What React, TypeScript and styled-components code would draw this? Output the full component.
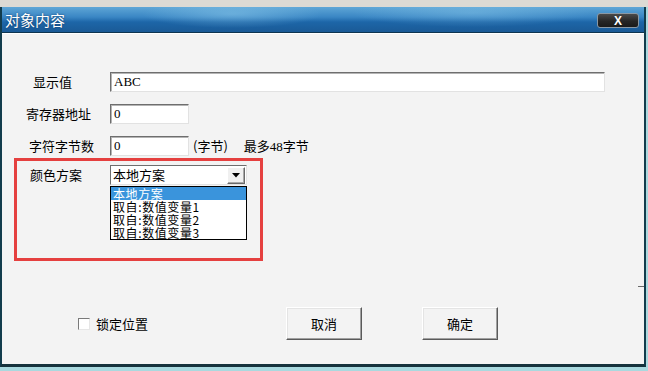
import React from "react";
import styled, { createGlobalStyle } from "styled-components";

const Global = createGlobalStyle`
  html, body { margin: 0; padding: 0; }
  body { width: 648px; height: 371px; overflow: hidden; background: #a9d9df; }
  * { box-sizing: border-box; }
`;

const FONT = `"Noto Sans CJK SC", "Liberation Sans", sans-serif`;
const MONO = `"Liberation Serif", "Noto Sans CJK SC", serif`;

const Page = styled.div`
  width: 648px;
  height: 371px;
  display: flex;
  flex-direction: column;
  background: linear-gradient(#dcdad4 0 7px, #a9d9df 7px);
`;

const Window = styled.div`
  margin-top: 7px;
  width: 646px;
  height: 360px;
  display: flex;
  flex-direction: column;
  border-left: 2px solid #123c4c;
  border-right: 2px solid #123c4c;
  border-bottom: 3px solid #16323c;
  position: relative;
`;

const TitleBar = styled.div`
  height: 26px;
  flex: 0 0 26px;
  display: flex;
  align-items: center;
  justify-content: space-between;
  padding: 0 5px 0 3px;
  background:
    radial-gradient(ellipse 90px 14px at 230px 7px, rgba(150, 210, 240, 0.45), transparent),
    radial-gradient(ellipse 120px 14px at 470px 6px, rgba(150, 210, 240, 0.35), transparent),
    linear-gradient(180deg, #5ea6d6 0%, #3a86c4 40%, #1d66a8 60%, #1a5a96 100%);
  border-bottom: 1px solid #0e3550;
`;

const Title = styled.span`
  font-family: ${FONT};
  font-size: 15px;
  line-height: 16px;
  color: #ffffff;
  text-shadow: 0 0 2px rgba(0, 30, 70, 0.7);
`;

const CloseButton = styled.div`
  width: 42px;
  height: 15px;
  margin-top: 2px;
  border-radius: 3px;
  border: 1px solid #8a98a4;
  background: linear-gradient(180deg, #4a4a4a 0%, #262626 55%, #1a1a1a 100%);
  display: flex;
  align-items: center;
  justify-content: center;
  color: #ffffff;
  font-family: "Liberation Sans", sans-serif;
  font-weight: bold;
  font-size: 12px;
  line-height: 12px;
`;

const Content = styled.div`
  flex: 1;
  position: relative;
  background: #f3f3f3;
  border-top: 1px solid #ffffff;
  padding-top: 38px;
  display: flex;
  flex-direction: column;
  font-family: ${FONT};
  font-size: 13px;
  color: #000;
`;

const Row = styled.div<{ $mt: number }>`
  display: flex;
  align-items: center;
  height: 20px;
  margin-top: ${(p) => p.$mt}px;
  position: relative;
`;

const LabelCell = styled.div<{ $indent: number }>`
  width: 108px;
  flex: 0 0 108px;
  padding-left: ${(p) => p.$indent}px;
  white-space: nowrap;
  line-height: 14px;
`;

const Field = styled.div<{ $w: number }>`
  width: ${(p) => p.$w}px;
  height: 20px;
  background: #ffffff;
  border-top: 1px solid #6e6e6e;
  border-left: 1px solid #6e6e6e;
  border-right: 1px solid #e2e2e2;
  border-bottom: 1px solid #e2e2e2;
  box-shadow: inset 1px 1px 0 #b4b4b4;
  padding-left: 3px;
  display: flex;
  align-items: center;
  font-family: ${MONO};
  font-size: 13px;
  line-height: 14px;
`;

const Note = styled.span<{ $ml: number }>`
  margin-left: ${(p) => p.$ml}px;
  white-space: nowrap;
  line-height: 14px;
`;

const Digits = styled.span`
  font-family: ${MONO};
`;

const Combo = styled.div`
  width: 137px;
  height: 20px;
  background: #ffffff;
  border-top: 1px solid #6e6e6e;
  border-left: 1px solid #6e6e6e;
  border-right: 1px solid #e2e2e2;
  border-bottom: 1px solid #e2e2e2;
  display: flex;
  align-items: center;
  position: relative;
`;

const ComboText = styled.span`
  flex: 1;
  padding-left: 2px;
  line-height: 14px;
  font-size: 13px;
`;

const ArrowButton = styled.div`
  width: 18px;
  height: 17px;
  margin-right: 1px;
  background: #f0f0f0;
  border-top: 1px solid #ffffff;
  border-left: 1px solid #ffffff;
  border-right: 1px solid #6a6a6a;
  border-bottom: 1px solid #6a6a6a;
  box-shadow: inset -1px -1px 0 #a8a8a8;
  display: flex;
  align-items: center;
  justify-content: center;
`;

const DropList = styled.div`
  position: absolute;
  left: 108px;
  top: 21px;
  width: 137px;
  background: #ffffff;
  border: 1px solid #000000;
  display: flex;
  flex-direction: column;
  z-index: 2;
`;

const Option = styled.div<{ $active?: boolean }>`
  height: 13px;
  line-height: 13px;
  padding-left: 2px;
  font-size: 12px;
  letter-spacing: 0.6px;
  white-space: nowrap;
  background: ${(p) => (p.$active ? "#3a94dc" : "transparent")};
  color: ${(p) => (p.$active ? "#ffffff" : "#000000")};
`;

const Highlight = styled.div`
  position: absolute;
  left: 12px;
  top: 124px;
  width: 249px;
  height: 103px;
  border: 3px solid #e5403f;
  pointer-events: none;
`;

const Footer = styled.div`
  margin-top: auto;
  margin-bottom: 24px;
  height: 33px;
  display: flex;
  align-items: center;
`;

const CheckWrap = styled.label`
  display: flex;
  align-items: center;
  margin-left: 76px;
  width: 208px;
  line-height: 14px;
`;

const CheckBox = styled.span`
  width: 12px;
  height: 12px;
  background: #ffffff;
  border-top: 1px solid #7a7a7a;
  border-left: 1px solid #7a7a7a;
  border-right: 1px solid #e6e6e6;
  border-bottom: 1px solid #e6e6e6;
  margin-right: 6px;
`;

const Button = styled.div<{ $ml: number }>`
  width: 76px;
  height: 33px;
  margin-left: ${(p) => p.$ml}px;
  background: #f3f3f3;
  border-top: 1px solid #ffffff;
  border-left: 1px solid #ffffff;
  border-right: 1px solid #5a5a5a;
  border-bottom: 1px solid #5a5a5a;
  box-shadow: inset -1px -1px 0 #a0a0a0, inset 1px 1px 0 #e4e4e4;
  display: flex;
  align-items: center;
  justify-content: center;
  line-height: 14px;
`;

const Tick = styled.div`
  position: absolute;
  right: 0;
  top: 252px;
  width: 6px;
  height: 1px;
  background: #6a6a6a;
`;

export default function App() {
  return (
    <>
      <Global />
      <Page>
        <Window>
          <TitleBar>
            <Title>对象内容</Title>
            <CloseButton>X</CloseButton>
          </TitleBar>
          <Content>
            <Row $mt={0}>
              <LabelCell $indent={31}>显示值</LabelCell>
              <Field $w={495}>ABC</Field>
            </Row>
            <Row $mt={12}>
              <LabelCell $indent={24}>寄存器地址</LabelCell>
              <Field $w={79}>0</Field>
            </Row>
            <Row $mt={12}>
              <LabelCell $indent={27}>字符字节数</LabelCell>
              <Field $w={79}>0</Field>
              <Note $ml={4}>(字节)</Note>
              <Note $ml={16}>
                最多<Digits>48</Digits>字节
              </Note>
            </Row>
            <Row $mt={9}>
              <LabelCell $indent={28}>颜色方案</LabelCell>
              <Combo>
                <ComboText>本地方案</ComboText>
                <ArrowButton>
                  <svg width="8" height="5" viewBox="0 0 8 5">
                    <path d="M0 0 H8 L4 4.5 Z" fill="#000" />
                  </svg>
                </ArrowButton>
              </Combo>
              <DropList>
                <Option $active>本地方案</Option>
                <Option>取自:数值变量1</Option>
                <Option>取自:数值变量2</Option>
                <Option>取自:数值变量3</Option>
              </DropList>
            </Row>
            <Footer>
              <CheckWrap>
                <CheckBox />
                锁定位置
              </CheckWrap>
              <Button $ml={0}>取消</Button>
              <Button $ml={60}>确定</Button>
            </Footer>
            <Highlight />
            <Tick />
          </Content>
        </Window>
      </Page>
    </>
  );
}
